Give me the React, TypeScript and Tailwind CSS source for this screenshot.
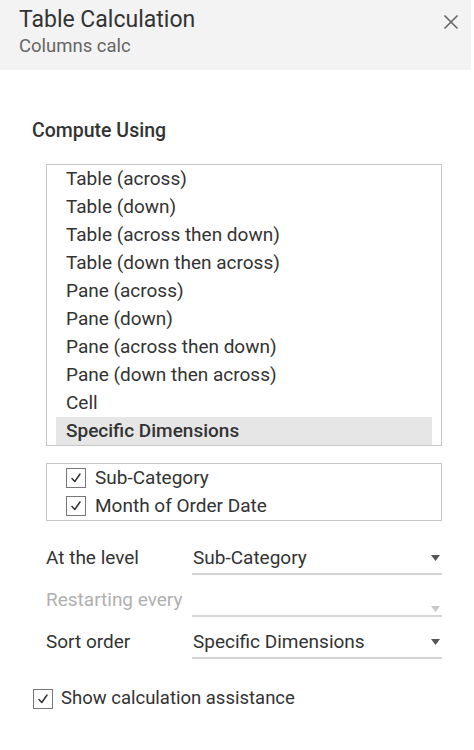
import React from "react";

const items = [
  "Table (across)",
  "Table (down)",
  "Table (across then down)",
  "Table (down then across)",
  "Pane (across)",
  "Pane (down)",
  "Pane (across then down)",
  "Pane (down then across)",
  "Cell",
  "Specific Dimensions",
];

function Check({ className = "" }: { className?: string }) {
  return (
    <div className={`w-[20px] h-[20px] border-[1.5px] border-[#777] bg-white flex items-center justify-center ${className}`}>
      <svg width="14" height="14" viewBox="0 0 14 14" fill="none">
        <path d="M3 7.5 L5.8 10.5 L11 3" stroke="#333" strokeWidth="1.5" strokeLinecap="round" strokeLinejoin="round" />
      </svg>
    </div>
  );
}

function Caret({ light }: { light?: boolean }) {
  return (
    <svg width="9" height="6" viewBox="0 0 9 6">
      <path d="M0 0 L9 0 L4.5 6 Z" fill={light ? "#c8c8c8" : "#555"} />
    </svg>
  );
}

function Row({ label, value, disabled }: { label: string; value: string; disabled?: boolean }) {
  return (
    <div className="flex items-end h-[42px]">
      <div className={`w-[146px] pb-[5px] text-[19px] leading-[24px] ${disabled ? "text-[#b0b0b0]" : "text-[#333]"}`}>{label}</div>
      <div className="w-[250px] flex items-center justify-between border-b-2 border-[#d4d4d4] pb-[3px] pl-[1px] pr-[2px]">
        <span className="text-[19px] leading-[24px] text-[#333]">{value}</span>
        <Caret light={disabled} />
      </div>
    </div>
  );
}

export default function App() {
  return (
    <div className="w-[474px] h-[750px] bg-white" style={{ fontFamily: "Roboto, 'Open Sans', sans-serif" }}>
      <div className="w-[471px] h-[70px] bg-[#f3f3f3] flex justify-between pl-[19px] pr-[12px] pt-[5px]">
        <div className="flex flex-col">
          <div className="text-[23px] leading-[30px] text-[#333]">Table Calculation</div>
          <div className="text-[18.5px] leading-[22px] text-[#666]">Columns calc</div>
        </div>
        <svg width="16" height="16" viewBox="0 0 16 16" className="mt-[9px]">
          <path d="M1.5 1.5 L14.5 14.5 M14.5 1.5 L1.5 14.5" stroke="#666" strokeWidth="1.6" />
        </svg>
      </div>

      <div className="pl-[32px] pt-[49px] text-[19.5px] leading-[24px] font-medium text-[#333]">Compute Using</div>

      <div className="ml-[46px] mt-[21px] w-[396px] border border-[#c8c8c8] pl-[9px] pr-[9px]">
        {items.map((t, i) => {
          const sel = i === items.length - 1;
          return (
            <div
              key={t}
              className={`h-[28px] pl-[10px] flex items-center text-[19px] text-[#333] ${sel ? "bg-[#e6e6e6] font-medium" : ""}`}
            >
              {t}
            </div>
          );
        })}
      </div>

      <div className="ml-[46px] mt-[17px] w-[396px] border border-[#c8c8c8] pl-[19px]">
        {["Sub-Category", "Month of Order Date"].map((t) => (
          <div key={t} className="h-[28px] flex items-center gap-[9px] text-[19px] text-[#333]">
            <Check />
            <span>{t}</span>
          </div>
        ))}
      </div>

      <div className="ml-[46px] mt-[12px]">
        <Row label="At the level" value="Sub-Category" />
        <Row label="Restarting every" value="" disabled />
        <Row label="Sort order" value="Specific Dimensions" />
      </div>

      <div className="ml-[33px] mt-[26px] flex items-center gap-[8px]">
        <Check />
        <span className="text-[18.5px] text-[#333]">Show calculation assistance</span>
      </div>
    </div>
  );
}
